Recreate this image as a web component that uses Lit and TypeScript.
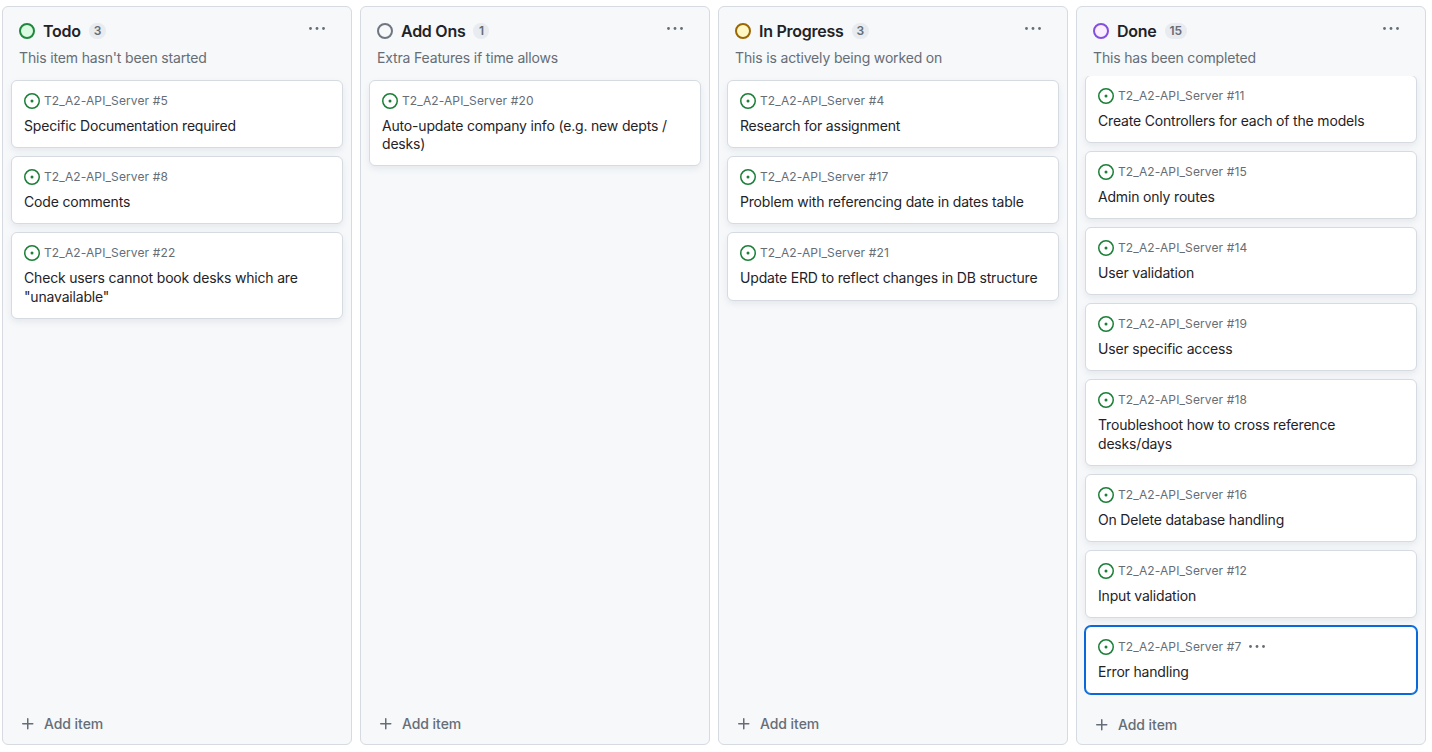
import { LitElement, html, svg, css, nothing } from "lit";
import { customElement, property } from "lit/decorators.js";
import { classMap } from "lit/directives/class-map.js";

interface Item {
  id: number;
  title: string;
  selected?: boolean;
}

interface Column {
  name: string;
  tone: string;
  count: number;
  description: string;
  scrolled?: boolean;
  items: Item[];
}

const REPO = "T2_A2-API_Server";

const COLUMNS: Column[] = [
  {
    name: "Todo",
    tone: "green",
    count: 3,
    description: "This item hasn't been started",
    items: [
      { id: 5, title: "Specific Documentation required" },
      { id: 8, title: "Code comments" },
      { id: 22, title: 'Check users cannot book desks which are "unavailable"' },
    ],
  },
  {
    name: "Add Ons",
    tone: "gray",
    count: 1,
    description: "Extra Features if time allows",
    items: [{ id: 20, title: "Auto-update company info (e.g. new depts / desks)" }],
  },
  {
    name: "In Progress",
    tone: "yellow",
    count: 3,
    description: "This is actively being worked on",
    items: [
      { id: 4, title: "Research for assignment" },
      { id: 17, title: "Problem with referencing date in dates table" },
      { id: 21, title: "Update ERD to reflect changes in DB structure" },
    ],
  },
  {
    name: "Done",
    tone: "purple",
    count: 15,
    description: "This has been completed",
    scrolled: true,
    items: [
      { id: 11, title: "Create Controllers for each of the models" },
      { id: 15, title: "Admin only routes" },
      { id: 14, title: "User validation" },
      { id: 19, title: "User specific access" },
      { id: 18, title: "Troubleshoot how to cross reference desks/days" },
      { id: 16, title: "On Delete database handling" },
      { id: 12, title: "Input validation" },
      { id: 7, title: "Error handling", selected: true },
    ],
  },
];

const dots = html`<svg class="dots" width="16" height="16" viewBox="0 0 16 16" fill="currentColor">
  ${[1.5, 8, 14.5].map((x) => svg`<circle cx=${x} cy="7.5" r="1.4"></circle>`)}
</svg>`;

@customElement("board-card")
export class BoardCard extends LitElement {
  @property({ attribute: false }) item!: Item;

  static styles = css`
    :host {
      display: block;
      flex: none;
    }
    .card {
      box-sizing: border-box;
      padding: 12px;
      border: 1px solid #d5dbe1;
      border-radius: 6px;
      background: #fff;
      box-shadow: 0 3px 6px rgba(140, 149, 159, 0.15);
    }
    .selected {
      border-color: #0969da;
      box-shadow: 0 0 0 1px #0969da;
    }
    .meta {
      display: flex;
      align-items: center;
      height: 16px;
      margin-bottom: 8px;
      color: #656d76;
      font-size: 12px;
      line-height: 16px;
      letter-spacing: 0.12px;
      white-space: nowrap;
    }
    .issue {
      flex: none;
      margin-right: 4px;
      fill: #1a7f37;
    }
    .dots {
      flex: none;
      margin-left: 8px;
    }
    .title {
      color: #1f2328;
      font-size: 14px;
      line-height: 18.2px;
      letter-spacing: -0.18px;
    }
  `;

  render() {
    const { id, title, selected } = this.item;
    return html`<article class=${classMap({ card: true, selected: !!selected })}>
      <div class="meta">
        <svg class="issue" width="16" height="16" viewBox="0 0 16 16">
          <path d="M8 9.5a1.5 1.5 0 1 0 0-3 1.5 1.5 0 0 0 0 3Z"></path>
          <path d="M8 0a8 8 0 1 1 0 16A8 8 0 0 1 8 0ZM1.5 8a6.5 6.5 0 1 0 13 0 6.5 6.5 0 0 0-13 0Z"></path>
        </svg>
        <span>${REPO} #${id}</span>
        ${selected ? dots : nothing}
      </div>
      <div class="title">${title}</div>
    </article>`;
  }
}

@customElement("board-column")
export class BoardColumn extends LitElement {
  @property({ attribute: false }) column!: Column;

  static styles = css`
    :host {
      display: block;
      min-height: 0;
    }
    .column {
      display: flex;
      flex-direction: column;
      box-sizing: border-box;
      height: 100%;
      border: 1px solid #d5dbe1;
      border-radius: 6px;
      background: #f6f8fa;
    }
    .header {
      flex: none;
      display: flex;
      align-items: center;
      height: 16px;
      padding: 16px 16px 0;
    }
    .status {
      box-sizing: border-box;
      width: 16px;
      height: 16px;
      margin-right: 8px;
      border: 2px solid;
      border-radius: 50%;
    }
    .green {
      border-color: #1f883d;
      background: #dafbe1;
    }
    .gray {
      border-color: #6e7781;
      background: #f6f8fa;
    }
    .yellow {
      border-color: #9a6700;
      background: #fff8c5;
    }
    .purple {
      border-color: #8250df;
      background: #fbefff;
    }
    .name {
      margin: 0;
      color: #1f2328;
      font-size: 16px;
      font-weight: 600;
      line-height: 16px;
      letter-spacing: -0.26px;
      white-space: nowrap;
    }
    .count {
      box-sizing: border-box;
      min-width: 16px;
      height: 16px;
      margin-left: 8px;
      padding: 0 5px;
      border-radius: 8px;
      background: #e8ebef;
      color: #656d76;
      font-size: 12px;
      font-weight: 600;
      line-height: 16px;
      text-align: center;
    }
    .menu {
      display: flex;
      height: 20px;
      margin: 0 10px 0 auto;
      color: #656d76;
    }
    .description {
      flex: none;
      height: 20px;
      padding: 9px 16px 0;
      color: #656d76;
      font-size: 14px;
      line-height: 20px;
      letter-spacing: -0.16px;
    }
    .list {
      flex: 1;
      min-height: 0;
      display: flex;
      flex-direction: column;
      gap: 8px;
      margin-top: 8px;
      padding: 4px 8px 0;
      overflow: hidden;
    }
    .scrolled board-card:first-child {
      margin-top: -5.4px;
    }
    .add {
      flex: none;
      display: flex;
      align-items: center;
      gap: 8px;
      height: 20px;
      padding: 8px 17px 10px;
      color: #656d76;
      font-size: 14px;
      font-weight: 500;
      line-height: 20px;
      letter-spacing: -0.06px;
    }
    .lower {
      padding-bottom: 9px;
    }
  `;

  render() {
    const c = this.column;
    const scrolled = !!c.scrolled;
    return html`<section class="column">
      <div class="header">
        <span class="status ${c.tone}"></span>
        <h2 class="name">${c.name}</h2>
        <span class="count">${c.count}</span>
        <span class="menu">${dots}</span>
      </div>
      <div class="description">${c.description}</div>
      <div class=${classMap({ list: true, scrolled })}>
        ${c.items.map((item) => html`<board-card .item=${item}></board-card>`)}
      </div>
      <div class=${classMap({ add: true, lower: scrolled })}>
        <svg width="16" height="16" viewBox="0 0 16 16" fill="currentColor">
          <path
            d="M7.75 2a.75.75 0 0 1 .75.75V7h4.25a.75.75 0 0 1 0 1.5H8.5v4.25a.75.75 0 0 1-1.5 0V8.5H2.75a.75.75 0 0 1 0-1.5H7V2.75A.75.75 0 0 1 7.75 2Z"
          ></path>
        </svg>
        <span>Add item</span>
      </div>
    </section>`;
  }
}

@customElement("app-root")
export class AppRoot extends LitElement {
  static styles = css`
    :host {
      display: block;
      height: 100vh;
      background: #fff;
      font-family: Inter, "Liberation Sans", sans-serif;
    }
    .board {
      display: grid;
      grid-template-columns: repeat(4, 350px);
      grid-template-rows: minmax(0, 1fr);
      gap: 8px;
      box-sizing: border-box;
      height: 100%;
      padding: 6px 2px 7px;
      overflow: hidden;
    }
  `;

  render() {
    return html`<main class="board">
      ${COLUMNS.map((column) => html`<board-column .column=${column}></board-column>`)}
    </main>`;
  }
}
